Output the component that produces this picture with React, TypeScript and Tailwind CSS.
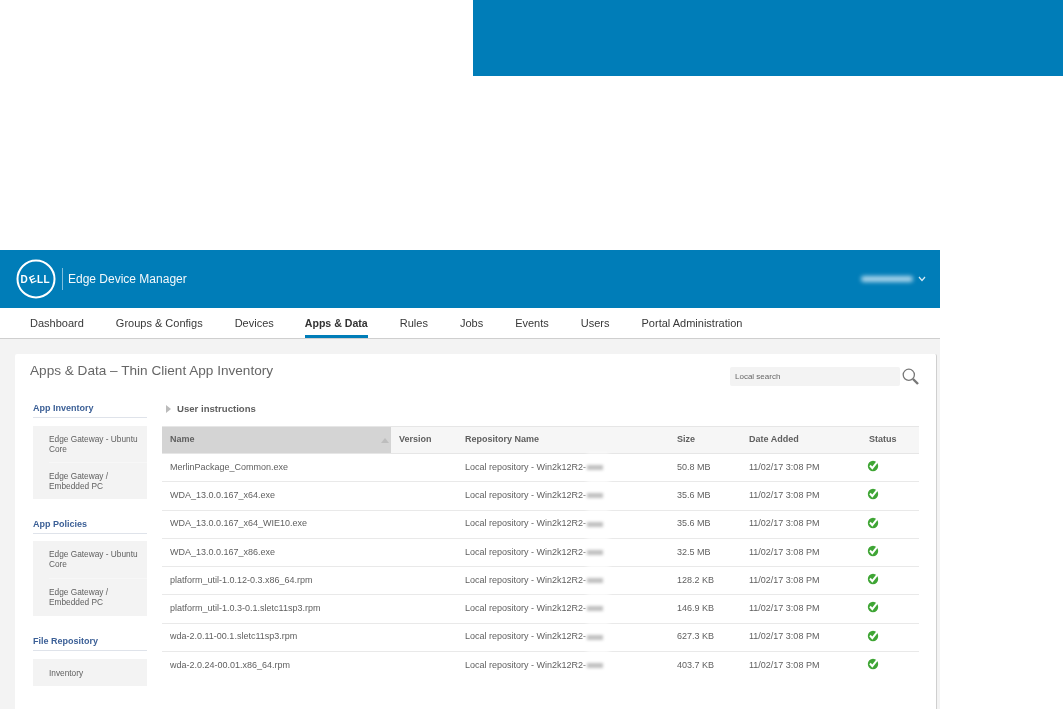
const navItems = [
  "Dashboard",
  "Groups & Configs",
  "Devices",
  "Apps & Data",
  "Rules",
  "Jobs",
  "Events",
  "Users",
  "Portal Administration",
];

const rows = [
  ["MerlinPackage_Common.exe", "50.8 MB"],
  ["WDA_13.0.0.167_x64.exe", "35.6 MB"],
  ["WDA_13.0.0.167_x64_WIE10.exe", "35.6 MB"],
  ["WDA_13.0.0.167_x86.exe", "32.5 MB"],
  ["platform_util-1.0.12-0.3.x86_64.rpm", "128.2 KB"],
  ["platform_util-1.0.3-0.1.sletc11sp3.rpm", "146.9 KB"],
  ["wda-2.0.11-00.1.sletc11sp3.rpm", "627.3 KB"],
  ["wda-2.0.24-00.01.x86_64.rpm", "403.7 KB"],
];

const sideGroups = [
  { title: "App Inventory", wrap: "", box: "mt-[8px]", row: "h-[36.5px]", items: ["Edge Gateway - Ubuntu Core", "Edge Gateway / Embedded PC"] },
  { title: "App Policies", wrap: "mt-[20px]", box: "mt-[7px]", row: "h-[37.5px]", items: ["Edge Gateway - Ubuntu Core", "Edge Gateway / Embedded PC"] },
  { title: "File Repository", wrap: "mt-[20px]", box: "mt-[8px]", row: "h-[27px]", items: ["Inventory"] },
];

function DellLogo() {
  return (
    <svg width="40" height="40" viewBox="0 0 40 40" className="shrink-0">
      <circle cx="20" cy="20" r="18.5" fill="none" stroke="#fff" strokeWidth="2" />
      <g fill="#fff" fontFamily="'Liberation Sans', sans-serif" fontWeight="700" fontSize="10">
        <text x="4.4" y="23.6">D</text>
        <text x="13.2" y="23.6" transform="rotate(-24 16.6 20)">E</text>
        <text x="21" y="23.6">L</text>
        <text x="27.6" y="23.6">L</text>
      </g>
    </svg>
  );
}

function StatusIcon() {
  return (
    <svg width="12" height="12" viewBox="0 0 12 12" className="mt-[-3px] ml-[-2px]">
      <circle cx="6" cy="6" r="5.2" fill="#3fa535" />
      <path d="M3 5.5 L5.3 8.2 L10 2.2" fill="none" stroke="#fff" strokeWidth="2" />
    </svg>
  );
}

function Sidebar() {
  return (
    <div className="w-[114px] shrink-0 flex flex-col">
      {sideGroups.map((g) => (
        <div key={g.title} className={g.wrap}>
          <div className="h-[15px] border-b border-[#dfe3ea] text-[9px] leading-[10px] font-bold text-[#3b5f96]">
            {g.title}
          </div>
          <div className={`${g.box} bg-[#f3f3f3] pl-[16px] text-[8.3px] leading-[10px] text-[#606060]`}>
            {g.items.map((item) => (
              <div key={item} className={`${g.row} flex items-center border-b border-[#f7f7f7] last:border-b-0`}>
                <span>{item}</span>
              </div>
            ))}
          </div>
        </div>
      ))}
    </div>
  );
}

function InventoryTable() {
  const cols = "grid grid-cols-[229px_66px_212px_72px_120px_58px]";
  return (
    <div className="w-[757px] mt-[11px] text-[9px] text-[#5f5f5f]">
      <div className={`${cols} h-[28px] border-t border-b border-[#e6e6e6] bg-[#f6f6f6] font-bold items-stretch`}>
        <div className="bg-[#d4d4d4] pl-2 pr-[2px] flex items-center justify-between">
          <span>Name</span>
          <span className="w-0 h-0 border-x-[4px] border-x-transparent border-b-[5px] border-b-[#bdbdbd]" />
        </div>
        <div className="pl-2 flex items-center">Version</div>
        <div className="pl-2 flex items-center">Repository Name</div>
        <div className="pl-2 flex items-center">Size</div>
        <div className="pl-2 flex items-center">Date Added</div>
        <div className="pl-2 flex items-center">Status</div>
      </div>
      {rows.map(([name, size]) => (
        <div key={name} className={`${cols} h-[28.25px] border-b border-[#e9e9e9] last:border-b-0 items-center`}>
          <div className="pl-2">{name}</div>
          <div />
          <div className="pl-2 flex items-center">
            <span>Local repository - Win2k12R2-</span>
            <span className="relative">
              <span className="absolute left-[1px] top-[-11px] w-[22px] h-[27px] bg-white blur-[2px]" />
              <span className="relative block ml-[1px] w-[16px] h-[5px] bg-[#c0c0c0] blur-[1.5px]" />
            </span>
          </div>
          <div className="pl-2">{size}</div>
          <div className="pl-2">11/02/17 3:08 PM</div>
          <div className="pl-2 flex items-center">
            <StatusIcon />
          </div>
        </div>
      ))}
    </div>
  );
}

export default function App() {
  return (
    <div className="w-[1063px] h-[709px] overflow-hidden bg-white font-[Liberation_Sans,Arial,sans-serif]">
      <div className="h-[76px] w-[590px] ml-auto bg-[#007db8]" />

      <div className="w-[940px] mt-[174px] blur-[0.3px]">
        <header className="h-[58px] bg-[#007db8] flex items-center pl-[16px] pr-[14px] text-white">
          <DellLogo />
          <div className="w-px h-[22px] bg-white/50 ml-[6px] mr-[5px]" />
          <span className="text-[12px] text-white/95">Edge Device Manager</span>
          <div className="ml-auto flex items-center gap-1">
            <span className="block w-[52px] h-[6px] rounded-full bg-[#a9d4ea] blur-[2px]" />
            <svg width="8" height="6" viewBox="0 0 8 6" className="ml-[1px]">
              <path d="M1 1 L4 4.5 L7 1" fill="none" stroke="#d6ebf5" strokeWidth="1.2" />
            </svg>
          </div>
        </header>

        <nav className="h-[31px] bg-white border-b border-[#cfcfcf] flex pl-[30px] gap-[32px] text-[11px] text-[#383838]">
          {navItems.map((item) =>
            item === "Apps & Data" ? (
              <span key={item} className="h-[30px] -ml-[1px] pt-[9px] leading-[13px] text-[10.6px] font-bold text-[#333] border-b-[3px] border-[#007db8]">
                {item}
              </span>
            ) : (
              <span key={item} className="pt-[9px] leading-[13px]">
                {item}
              </span>
            )
          )}
        </nav>

        <div className="h-[370px] bg-[#f3f3f3] pt-[15px] pl-[15px] pr-[3px]">
          <div className="h-[355px] bg-white rounded-t-[2px] border-r border-[#cfcfcf] pt-[13px] pl-[15px] pr-[17px]">
            <div className="flex items-center justify-between h-[19px]">
              <h1 className="text-[13.6px] leading-[6px] mb-[11px] text-[#666]">Apps &amp; Data – Thin Client App Inventory</h1>
              <div className="flex items-center gap-[2px]">
                <div className="w-[170px] h-[19px] rounded-[2px] bg-[#f3f3f3] pl-[5px] text-[8px] leading-[19px] text-[#666]">
                  Local search
                </div>
                <svg width="17" height="17" viewBox="0 0 17 17">
                  <circle cx="6.8" cy="6.8" r="5.6" fill="none" stroke="#777" strokeWidth="1.3" />
                  <path d="M11 11 L16 16" stroke="#777" strokeWidth="2.4" />
                </svg>
              </div>
            </div>

            <div className="flex mt-[17px] pl-[3px] gap-[15px]">
              <Sidebar />
              <div>
                <div className="flex items-center h-[12px] pl-[4px] gap-[6px] text-[9.6px] font-bold text-[#5f5f5f]">
                  <span className="w-0 h-0 border-y-[4px] border-y-transparent border-l-[5px] border-l-[#bbb]" />
                  <span>User instructions</span>
                </div>
                <InventoryTable />
              </div>
            </div>
          </div>
        </div>
      </div>
    </div>
  );
}
